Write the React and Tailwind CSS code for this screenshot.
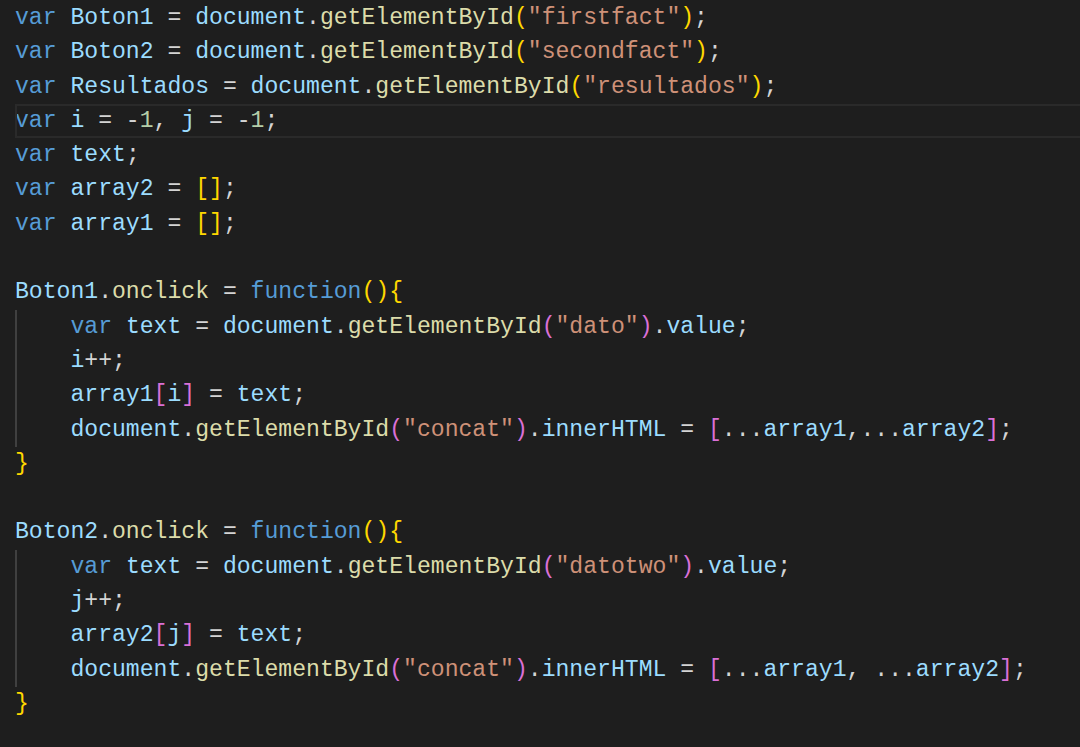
import React from "react";

const K = "text-[#569cd6]";
const V = "text-[#9cdcfe]";
const P = "text-[#d4d4d4]";
const F = "text-[#dcdcaa]";
const S = "text-[#ce9178]";
const N = "text-[#b5cea8]";
const Y = "text-[#ffd700]";
const M = "text-[#da70d6]";

const t = (c, s) => ({ c, s });

const lines = [
  [t(K, "var"), t(P, " "), t(V, "Boton1"), t(P, " = "), t(V, "document"), t(P, "."), t(F, "getElementById"), t(Y, "("), t(S, '"firstfact"'), t(Y, ")"), t(P, ";")],
  [t(K, "var"), t(P, " "), t(V, "Boton2"), t(P, " = "), t(V, "document"), t(P, "."), t(F, "getElementById"), t(Y, "("), t(S, '"secondfact"'), t(Y, ")"), t(P, ";")],
  [t(K, "var"), t(P, " "), t(V, "Resultados"), t(P, " = "), t(V, "document"), t(P, "."), t(F, "getElementById"), t(Y, "("), t(S, '"resultados"'), t(Y, ")"), t(P, ";")],
  [t(K, "var"), t(P, " "), t(V, "i"), t(P, " = -"), t(N, "1"), t(P, ", "), t(V, "j"), t(P, " = -"), t(N, "1"), t(P, ";")],
  [t(K, "var"), t(P, " "), t(V, "text"), t(P, ";")],
  [t(K, "var"), t(P, " "), t(V, "array2"), t(P, " = "), t(Y, "[]"), t(P, ";")],
  [t(K, "var"), t(P, " "), t(V, "array1"), t(P, " = "), t(Y, "[]"), t(P, ";")],
  [],
  [t(V, "Boton1"), t(P, "."), t(F, "onclick"), t(P, " = "), t(K, "function"), t(Y, "(){")],
  [t(P, "    "), t(K, "var"), t(P, " "), t(V, "text"), t(P, " = "), t(V, "document"), t(P, "."), t(F, "getElementById"), t(M, "("), t(S, '"dato"'), t(M, ")"), t(P, "."), t(V, "value"), t(P, ";")],
  [t(P, "    "), t(V, "i"), t(P, "++;")],
  [t(P, "    "), t(V, "array1"), t(M, "["), t(V, "i"), t(M, "]"), t(P, " = "), t(V, "text"), t(P, ";")],
  [t(P, "    "), t(V, "document"), t(P, "."), t(F, "getElementById"), t(M, "("), t(S, '"concat"'), t(M, ")"), t(P, "."), t(V, "innerHTML"), t(P, " = "), t(M, "["), t(P, "..."), t(V, "array1"), t(P, ",..."), t(V, "array2"), t(M, "]"), t(P, ";")],
  [t(Y, "}")],
  [],
  [t(V, "Boton2"), t(P, "."), t(F, "onclick"), t(P, " = "), t(K, "function"), t(Y, "(){")],
  [t(P, "    "), t(K, "var"), t(P, " "), t(V, "text"), t(P, " = "), t(V, "document"), t(P, "."), t(F, "getElementById"), t(M, "("), t(S, '"datotwo"'), t(M, ")"), t(P, "."), t(V, "value"), t(P, ";")],
  [t(P, "    "), t(V, "j"), t(P, "++;")],
  [t(P, "    "), t(V, "array2"), t(M, "["), t(V, "j"), t(M, "]"), t(P, " = "), t(V, "text"), t(P, ";")],
  [t(P, "    "), t(V, "document"), t(P, "."), t(F, "getElementById"), t(M, "("), t(S, '"concat"'), t(M, ")"), t(P, "."), t(V, "innerHTML"), t(P, " = "), t(M, "["), t(P, "..."), t(V, "array1"), t(P, ", ..."), t(V, "array2"), t(M, "]"), t(P, ";")],
  [t(Y, "}")],
];

const guided = new Set([9, 10, 11, 12, 16, 17, 18, 19]);

export default function App() {
  return (
    <div
      className="w-full h-[747px] bg-[#1e1e1e] overflow-hidden pl-[15px] pt-[1px]"
      style={{ fontFamily: '"Liberation Mono", "DejaVu Sans Mono", monospace' }}
    >
      <div className="flex flex-col text-[23.1px]">
        {lines.map((toks, i) => (
          <div
            key={i}
            className={
              "relative h-[34.3px] leading-[34.3px] whitespace-pre " +
              (guided.has(i) ? "shadow-[inset_2px_0_0_#404040]" : "")
            }
          >
            {i === 3 && (
              <span className="absolute left-0 right-[-4px] top-0 bottom-0 border-2 border-[#2a2a2a] pointer-events-none" />
            )}
            {toks.map((tk, j) => (
              <span key={j} className={tk.c}>
                {tk.s}
              </span>
            ))}
            {toks.length === 0 ? " " : null}
          </div>
        ))}
      </div>
    </div>
  );
}
